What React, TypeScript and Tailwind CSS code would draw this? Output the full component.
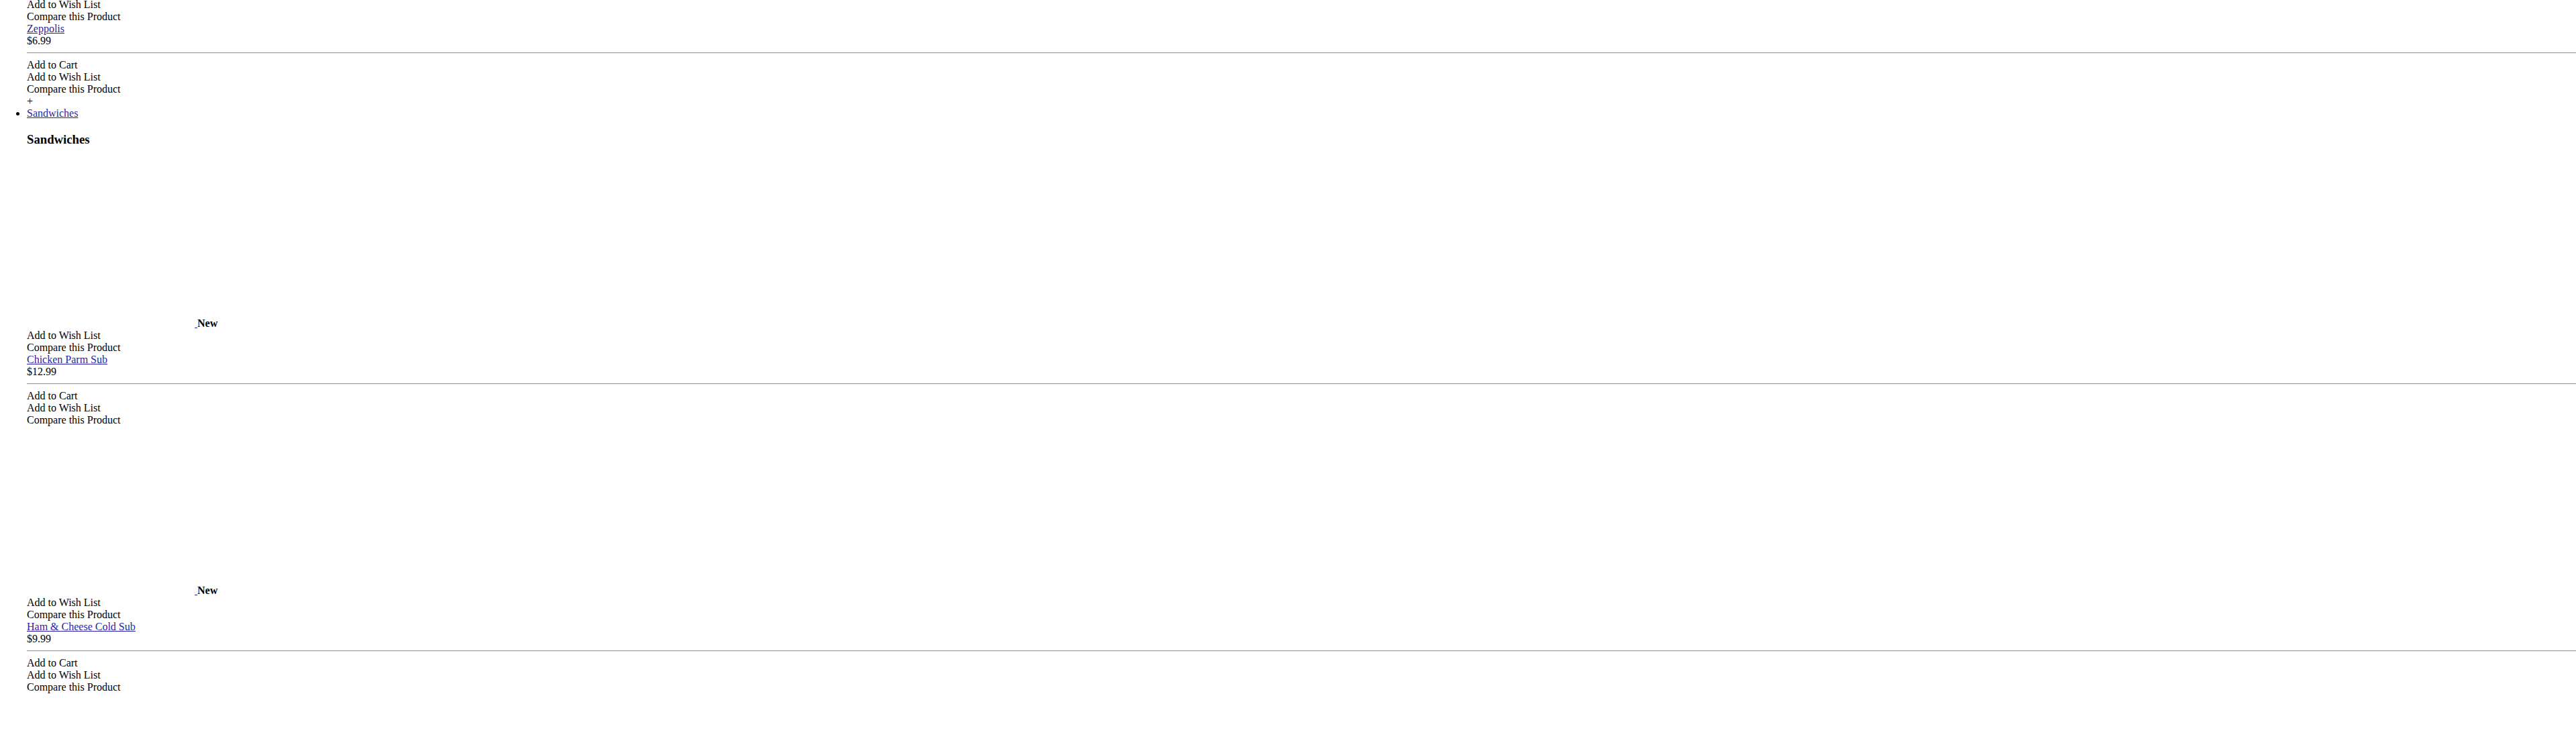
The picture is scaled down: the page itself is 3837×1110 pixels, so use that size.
import React from "react";

type Product = { name: string; price: string };

const sandwiches: Product[] = [
  { name: "Chicken Parm Sub", price: "$12.99" },
  { name: "Ham & Cheese Cold Sub", price: "$9.99" },
];

function Rule() {
  return (
    <hr className="my-2 h-0 border-0 border-t border-b border-t-[#9a9a9a] border-b-[#eeeeee]" />
  );
}

function Actions() {
  return (
    <>
      <div>Add to Cart</div>
      <div>Add to Wish List</div>
      <div>Compare this Product</div>
    </>
  );
}

function ProductItem({ product }: { product: Product }) {
  return (
    <div>
      <div>
        <a href="#" className="text-[#2a1fa6] underline">
          <span className="inline-block w-[250px] h-[250px] align-baseline" />{" "}
        </a>
        <b className="font-bold">New</b>
      </div>
      <div>Add to Wish List</div>
      <div>Compare this Product</div>
      <div>
        <a href="#" className="text-[#2a1fa6] underline">
          {product.name}
        </a>
      </div>
      <div>{product.price}</div>
      <Rule />
      <Actions />
    </div>
  );
}

export default function App() {
  return (
    <div className="min-h-screen bg-white text-black font-['Liberation_Serif',serif] text-base leading-[normal] overflow-hidden">
      <div className="-mt-[2px] pl-10">
        <div>Add to Wish List</div>
        <div>Compare this Product</div>
        <div>
          <a href="#" className="text-[#2a1fa6] underline">
            Zeppolis
          </a>
        </div>
        <div>$6.99</div>
        <Rule />
        <Actions />
        <div>+</div>
      </div>
      <ul className="list-disc pl-10">
        <li>
          <a href="#" className="text-[#2a1fa6] underline">
            Sandwiches
          </a>
        </li>
      </ul>
      <div className="pl-10">
        <h3 className="text-[18.72px] font-bold my-[18.72px]">Sandwiches</h3>
        {sandwiches.map((p) => (
          <ProductItem key={p.name} product={p} />
        ))}
      </div>
    </div>
  );
}
